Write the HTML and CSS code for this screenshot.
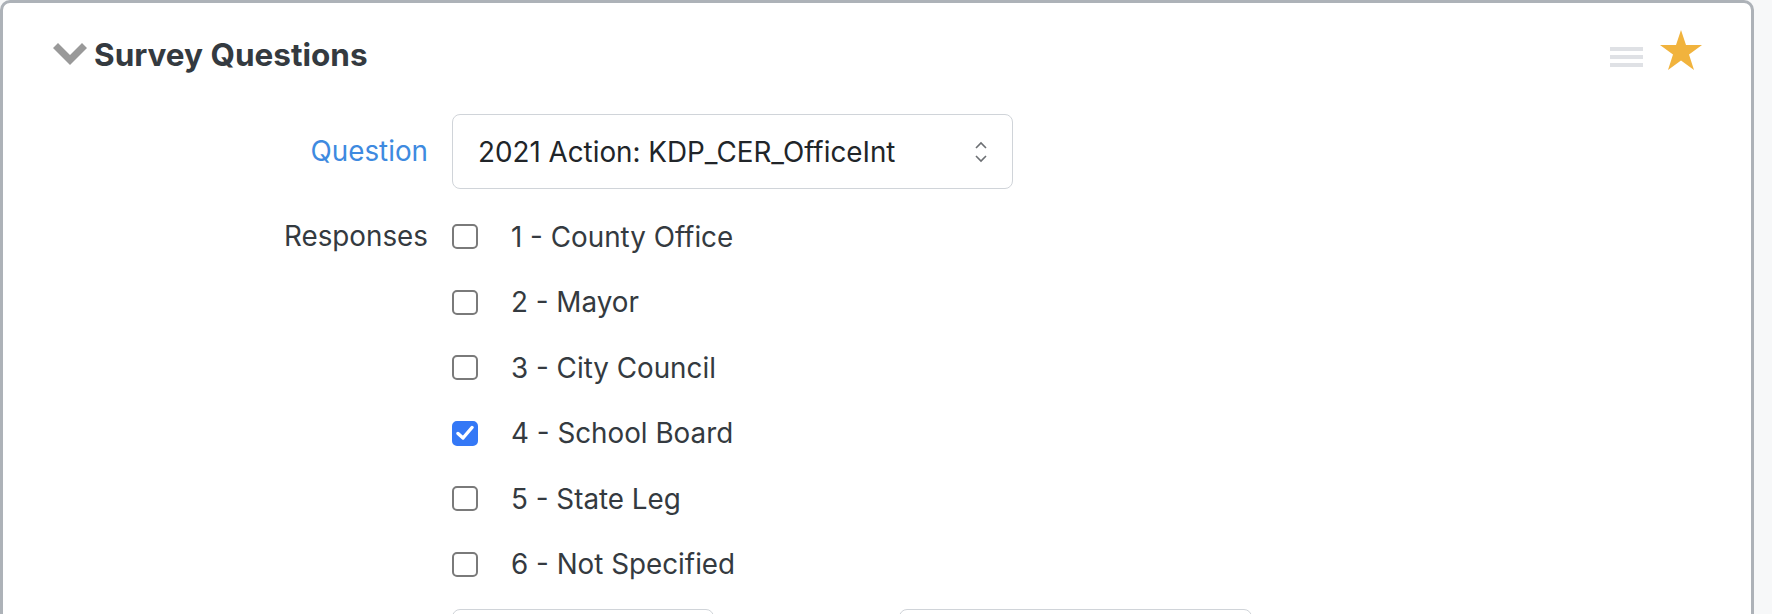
FILE: index.html
```html
<!DOCTYPE html>
<html lang="en">
<head>
<meta charset="utf-8">
<title>Survey Questions</title>
<link rel="stylesheet" href="styles.css">
</head>
<body>
<section class="panel">
  <header class="panel-header">
    <svg class="chevron" width="34" height="22" viewBox="0 0 34 22" aria-hidden="true">
      <polygon points="0,5 5,0 17,12 29,0 34,5 17,22" fill="#999999"/>
    </svg>
    <h2 class="panel-title">Survey Questions</h2>
    <div class="panel-tools">
      <svg class="grip" width="33" height="20" viewBox="0 0 33 20" aria-hidden="true">
        <rect x="0" y="0" width="33" height="4" fill="#dfe1e5"/>
        <rect x="0" y="8" width="33" height="4" fill="#dfe1e5"/>
        <rect x="0" y="16" width="33" height="4" fill="#dfe1e5"/>
      </svg>
      <svg class="star" width="42" height="40" viewBox="0 0 42 40" aria-hidden="true">
        <polygon points="21,0 26,15 42,15 29,24.5 34,40 21,30.5 8,40 13,24.5 0,15 16,15" fill="#f1b33d"/>
      </svg>
    </div>
  </header>

  <div class="form">
    <div class="form-row question-row">
      <label class="form-label label-link">Question</label>
      <div class="select">
        <span class="select-text">2021 Action: KDP_CER_OfficeInt</span>
        <svg class="select-arrows" width="14" height="24" viewBox="0 0 14 24" aria-hidden="true">
          <polyline points="2,8 7,3 12,8" fill="none" stroke="#6c6f73" stroke-width="1.6"/>
          <polyline points="2,16 7,21 12,16" fill="none" stroke="#6c6f73" stroke-width="1.6"/>
        </svg>
      </div>
    </div>

    <div class="form-row responses-row">
      <span class="form-label">Responses</span>
      <ul class="options">
        <li class="option"><span class="box"></span><span class="option-text">1 - County Office</span></li>
        <li class="option"><span class="box"></span><span class="option-text">2 - Mayor</span></li>
        <li class="option"><span class="box"></span><span class="option-text">3 - City Council</span></li>
        <li class="option"><span class="box checked"><svg width="18" height="16" viewBox="0 0 18 16" aria-hidden="true"><polyline points="2,8.5 7,13 16,2.5" fill="none" stroke="#ffffff" stroke-width="3.4" stroke-linecap="round" stroke-linejoin="round"/></svg></span><span class="option-text">4 - School Board</span></li>
        <li class="option"><span class="box"></span><span class="option-text">5 - State Leg</span></li>
        <li class="option"><span class="box"></span><span class="option-text">6 - Not Specified</span></li>
      </ul>
    </div>

    <div class="form-row bottom-row">
      <span class="form-label"></span>
      <div class="bottom-fields">
        <div class="input input-a"></div>
        <div class="input input-b"></div>
      </div>
    </div>
  </div>
</section>
</body>
</html>
```
FILE: styles.css
```css
html, body {
  margin: 0;
  padding: 0;
}
body {
  background: #f7f8f9;
  font-family: "Inter", "Liberation Sans", sans-serif;
  color: #343a40;
  overflow: hidden;
}
.panel {
  width: 1754px;
  box-sizing: border-box;
  min-height: 760px;
  background: #ffffff;
  border: 3px solid #adb2b8;
  border-radius: 10px;
}
.panel-header {
  display: flex;
  align-items: center;
  height: 102px;
  padding: 0 49px 0 50px;
}
.chevron {
  flex: none;
  margin-right: 7px;
}
.panel-title {
  margin: 0;
  font-size: 31.5px;
  font-weight: 700;
  color: #343a40;
  flex: 1;
}
.panel-tools {
  display: flex;
  align-items: center;
  gap: 17px;
}
.grip {
  margin-top: 5px;
}
.star {
  margin-top: -9px;
}
.form {
  padding-top: 9px;
}
.form-row {
  display: grid;
  grid-template-columns: 425px 1fr;
  column-gap: 24px;
}
.form-label {
  text-align: right;
  font-size: 27.8px;
  color: #343a40;
}
.question-row .form-label {
  line-height: 75px;
}
.label-link {
  color: #3e8ae0;
}
.select {
  width: 561px;
  height: 75px;
  box-sizing: border-box;
  border: 1.5px solid #d0d4d9;
  border-radius: 8px;
  display: flex;
  align-items: center;
  padding: 0 24px 0 25px;
}
.select-text {
  flex: 1;
  font-size: 27.8px;
  color: #212529;
}
.select-arrows {
  flex: none;
}
.responses-row {
  margin-top: 15px;
}
.responses-row .form-label {
  line-height: 65.5px;
}
.options {
  list-style: none;
  margin: 0;
  padding: 0;
}
.option {
  display: flex;
  align-items: center;
  height: 65.5px;
}
.box {
  width: 26px;
  height: 25px;
  box-sizing: border-box;
  border: 2px solid #7a7a7a;
  border-radius: 5px;
  margin-right: 33px;
  display: flex;
  align-items: center;
  justify-content: center;
}
.box.checked {
  background: #3478f6;
  border-color: #3478f6;
}
.option-text {
  font-size: 27.8px;
  color: #343a40;
}
.bottom-row {
  margin-top: 12px;
}
.bottom-fields {
  display: flex;
  gap: 185px;
}
.input {
  height: 70px;
  box-sizing: border-box;
  border: 1.5px solid #d0d4d9;
  border-radius: 8px;
}
.input-a {
  width: 262px;
}
.input-b {
  width: 353px;
}
```
